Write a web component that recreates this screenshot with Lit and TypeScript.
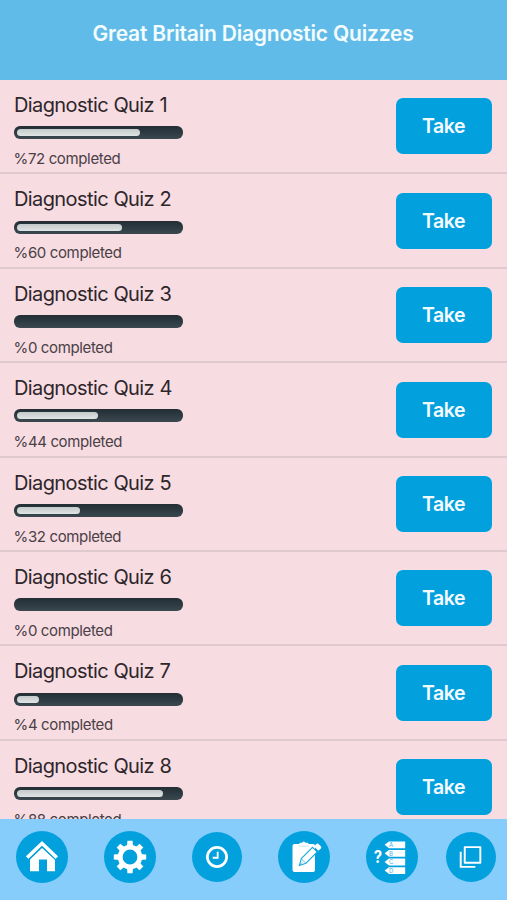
import { LitElement, html, css, svg } from "lit";
import { customElement, property } from "lit/decorators.js";

interface Quiz {
  n: number;
  done: number;
}

const QUIZZES: Quiz[] = [72, 60, 0, 44, 32, 0, 4, 88].map((done, i) => ({ n: i + 1, done }));

@customElement("quiz-row")
export class QuizRow extends LitElement {
  @property({ type: Number }) n = 0;
  @property({ type: Number }) done = 0;

  static styles = css`
    :host {
      display: flex;
      justify-content: space-between;
      box-sizing: border-box;
      flex: none;
      height: 94.4px;
      padding: 13px 15px 0 14px;
      border-bottom: 2px solid #dfc9cf;
    }
    .title {
      font-size: 20px;
      line-height: 24px;
      letter-spacing: -0.6px;
      word-spacing: 0.4px;
      color: #2d262a;
      white-space: nowrap;
    }
    .track {
      box-sizing: border-box;
      width: 169px;
      height: 13px;
      margin-top: 9.3px;
      padding: 3px;
      border-radius: 6px;
      background: linear-gradient(#222d34, #3b484f);
    }
    .fill {
      height: 7px;
      border-radius: 3.5px;
      background: linear-gradient(#c3c8ca, #dfe4e4);
    }
    .status {
      margin: 10.7px 0 0 -0.5px;
      font-size: 15px;
      line-height: 18px;
      letter-spacing: -0.36px;
      color: #4a4045;
      white-space: nowrap;
    }
    button {
      width: 96px;
      height: 56px;
      margin: 5.4px 0 0;
      padding: 0;
      border: 0;
      border-radius: 7px;
      background: #03a0de;
      color: #f4fbff;
      font: 600 19.5px/56px Inter, "Liberation Sans", sans-serif;
      letter-spacing: -0.5px;
      text-indent: -1px;
    }
  `;

  render() {
    const width = 15.6 + this.done * 1.485;
    return html`
      <div>
        <div class="title">Diagnostic Quiz ${this.n}</div>
        <div class="track">
          ${this.done > 0 ? html`<div class="fill" style="width:${width}px"></div>` : null}
        </div>
        <div class="status">%${this.done} completed</div>
      </div>
      <button>Take</button>
    `;
  }
}

const home = svg`
  <path d="M11.2 26.6 26 12.4 40.8 26.6" fill="none" stroke="#fff" stroke-width="3.6"/>
  <path d="M14 28.4 26 17 39 28.4V40.2H31V28.6H23V40.2H14Z" fill="#fff"/>
  <path d="M12.5 28.6 26 15.7 39.5 28.6" fill="none" stroke="#03a0de" stroke-width="1.1"/>`;

const gear = svg`
  <g fill="#fff">
    ${[0, 45, 90, 135, 180, 225, 270, 315].map(
      (a) => svg`<path d="M23 16 23.4 9.8H28.6L29 16Z" transform="rotate(${a} 26 26)"/>`
    )}
  </g>
  <circle cx="26" cy="26" r="9.8" fill="none" stroke="#fff" stroke-width="4.8"/>`;

const clock = svg`
  <circle cx="26" cy="26" r="10" fill="none" stroke="#fff" stroke-width="2.8"/>
  <path d="M26.7 20.6V26.8H21.5" fill="none" stroke="#fff" stroke-width="1.9"/>`;

const clipboard = svg`
  <path d="M16.5 13H21L22.2 11.8H24Q25.8 9 27.6 11.8H29.5L31 13H35.2Q37 13 37 15V39Q37 41 35 41H16.5Q14.5 41 14.5 39V15Q14.5 13 16.5 13Z" fill="#fff"/>
  <path d="M20.5 15.2H31" stroke="#b9e2f4" stroke-width=".8"/>
  <path d="M21.4 34.4 23.3 27.5 34.5 16.3 39.2 20.9 28 32.2Z" fill="#fff" stroke="#1da8df" stroke-width="1.1"/>
  <path d="M23.3 27.8 27.7 32M21.4 34.4 24.2 31.4" fill="none" stroke="#1da8df" stroke-width=".7"/>
  <path d="M36 15.4 38.6 12.8Q39.4 12 40.3 12.8L43 15.4Q43.8 16.3 43 17.2L40.4 19.8Z" fill="#fff"/>`;

const answers = svg`
  <text x="7.8" y="32" font-size="17" font-weight="700" fill="#fff" textLength="8.3" lengthAdjust="spacingAndGlyphs">?</text>
  ${["A", "B", "C", "D"].map(
    (letter, i) => svg`
      <g transform="translate(0 ${i * 8.6})">
        <path d="M18.6 13.7 23 10.4H39.2V17.2H23Z" fill="#fff"/>
        <text x="23" y="16" font-size="6" fill="#3fb2e0">${letter}</text>
      </g>`
  )}`;

const copies = svg`
  <path d="M19.5 15.7H35.7V31.9H19.5Z" fill="none" stroke="#fff" stroke-width="2" stroke-linejoin="round"/>
  <path d="M15.3 20.5V36.3H30.5" fill="none" stroke="#fff" stroke-width="2" stroke-linejoin="round"/>`;

const TABS = [
  { name: "home", size: "large", art: home },
  { name: "settings", size: "large", art: gear },
  { name: "history", size: "small", art: clock },
  { name: "tests", size: "large", art: clipboard },
  { name: "answers", size: "large", art: answers },
  { name: "more", size: "small last", art: copies },
];

@customElement("app-root")
export class AppRoot extends LitElement {
  static styles = css`
    :host {
      display: flex;
      flex-direction: column;
      width: 100%;
      height: 900px;
      overflow: hidden;
      background: #f7dce2;
      font-family: Inter, "Liberation Sans", sans-serif;
    }
    header {
      flex: none;
      box-sizing: border-box;
      height: 80px;
      padding-top: 20px;
      background: #61bbe8;
      color: #f3fcff;
      text-align: center;
      font-size: 21px;
      font-weight: 600;
      line-height: 27px;
      letter-spacing: -0.2px;
      text-indent: -1px;
      white-space: nowrap;
    }
    main {
      display: flex;
      flex-direction: column;
      flex: 1;
      min-height: 0;
      overflow: hidden;
    }
    nav {
      display: flex;
      flex: none;
      align-items: center;
      gap: 36px;
      box-sizing: border-box;
      height: 81px;
      padding: 0 0 5px 16px;
      background: #87cdfb;
    }
    .tab {
      flex: none;
      border-radius: 50%;
      background: #03a0de;
    }
    .tab svg {
      display: block;
      width: 100%;
      height: 100%;
    }
    .large {
      width: 52px;
      height: 52px;
    }
    .small {
      width: 50px;
      height: 50px;
    }
    .last {
      margin-left: -8px;
    }
  `;

  render() {
    return html`
      <header>Great Britain Diagnostic Quizzes</header>
      <main>${QUIZZES.map((q) => html`<quiz-row .n=${q.n} .done=${q.done}></quiz-row>`)}</main>
      <nav>
        ${TABS.map(
          (t) => html`<div class="tab ${t.size}" aria-label=${t.name}>
            <svg viewBox="0 0 52 52">${t.art}</svg>
          </div>`
        )}
      </nav>
    `;
  }
}
